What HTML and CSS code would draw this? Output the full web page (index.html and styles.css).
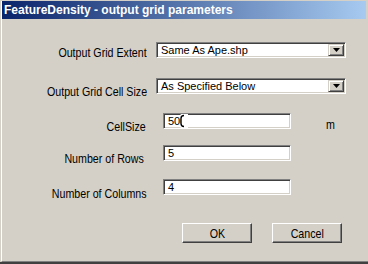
FILE: index.html
```html
<!DOCTYPE html>
<html>
<head>
<meta charset="utf-8">
<link rel="stylesheet" href="styles.css">
</head>
<body>
<div class="window">
  <div class="frame">
    <div class="titlebar">FeatureDensity - output grid parameters</div>
    <div class="content">
      <div class="row r1">
        <div class="label"><span class="narrow">Output Grid Extent</span></div>
        <div class="combo">
          <span class="combo-text">Same As Ape.shp</span>
          <span class="combo-btn"><svg width="7" height="4" viewBox="0 0 7 4"><path d="M0 0H7L3.5 4Z" fill="#000"/></svg></span>
        </div>
      </div>
      <div class="row r2">
        <div class="label"><span class="narrow">Output Grid Cell Size</span></div>
        <div class="combo">
          <span class="combo-text">As Specified Below</span>
          <span class="combo-btn"><svg width="7" height="4" viewBox="0 0 7 4"><path d="M0 0H7L3.5 4Z" fill="#000"/></svg></span>
        </div>
      </div>
      <div class="row r3">
        <div class="label"><span class="narrow">CellSize</span></div>
        <div class="field has-cursor">500<svg class="ibeam" width="10" height="14" viewBox="0 0 10 14"><rect x="2.6" y="0" width="7.4" height="14" fill="#fff"/><path d="M6 1.5Q3 1.5 3 4.5V9.5Q3 12.5 6 12.5" fill="none" stroke="#000" stroke-width="1.4"/></svg></div>
        <div class="unit"><span class="narrow">m</span></div>
      </div>
      <div class="row r4">
        <div class="label"><span class="narrow">Number of Rows</span></div>
        <div class="field">5</div>
      </div>
      <div class="row r5">
        <div class="label"><span class="narrow">Number of Columns</span></div>
        <div class="field">4</div>
      </div>
      <div class="buttons">
        <div class="btn"><span class="narrow">OK</span></div>
        <div class="btn"><span class="narrow">Cancel</span></div>
      </div>
    </div>
  </div>
</div>
</body>
</html>
```
FILE: styles.css
```css
html, body { margin: 0; padding: 0; background: #d4d0c8; }
.window {
  width: 368px; height: 264px; box-sizing: border-box;
  background: #d4d0c8;
  padding: 1px 0 0 1px;
  border-bottom: 2px solid #404040;
}
.frame {
  height: 100%; box-sizing: border-box;
  border-left: 1px solid #ffffff;
  border-bottom: 1px solid #808080;
}
.titlebar {
  height: 18px; margin-right: 2px;
  background: linear-gradient(to right, #0a246a, #a6caf0);
  color: #fff;
  font: bold 12px "Liberation Sans", Arial, sans-serif;
  line-height: 18px;
  padding-left: 2px;
  white-space: nowrap;
}
.content { display: flex; flex-direction: column; }
.row { display: flex; align-items: flex-start; height: 16px; }
.r1 { margin-top: 23px; }
.r2 { margin-top: 20px; }
.r3 { margin-top: 19px; }
.r4 { margin-top: 16px; }
.r5 { margin-top: 18px; }
.narrow {
  display: inline-block;
  font: 13px "Liberation Sans", Arial, sans-serif;
  transform: scaleX(0.82);
  white-space: nowrap;
}
.label {
  width: 145px; flex: none; box-sizing: border-box; text-align: right;
  line-height: 16px; color: #000; white-space: nowrap;
  padding-top: 5px;
}
.label .narrow { transform-origin: right center; }
.r1 .label { padding-top: 2px; }
.r3 .label { padding-right: 1px; }
.r4 .label { padding-right: 3px; }
.r5 .label { padding-top: 6px; padding-right: 0; }
.combo {
  margin-left: 9px;
  width: 190px; height: 16px; box-sizing: border-box;
  background: #fff;
  border-style: solid; border-width: 1px;
  border-color: #808080 #ffffff #ffffff #808080;
  box-shadow: inset 1px 1px 0 #404040, inset -1px -1px 0 #d4d0c8;
  display: flex; align-items: center; justify-content: space-between;
  padding: 1px;
}
.combo-text {
  font: 11px "Liberation Sans", Arial, sans-serif; color: #000;
  padding-left: 3px; line-height: 12px;
}
.combo-btn {
  width: 16px; height: 12px; box-sizing: border-box;
  background: #d4d0c8;
  border-style: solid; border-width: 1px;
  border-color: #d4d0c8 #404040 #404040 #d4d0c8;
  box-shadow: inset 1px 1px 0 #fff, inset -1px -1px 0 #808080;
  display: flex; align-items: center; justify-content: center;
}
.combo-btn svg { display: block; }
.field {
  margin-left: 16px;
  width: 128px; height: 16px; box-sizing: border-box;
  background: #fff;
  border-style: solid; border-width: 1px;
  border-color: #808080 #ffffff #ffffff #808080;
  box-shadow: inset 1px 1px 0 #404040, inset -1px -1px 0 #d4d0c8;
  font: 11px "Liberation Sans", Arial, sans-serif; color: #000;
  line-height: 14px; padding-left: 4px;
}
.has-cursor { position: relative; }
.ibeam { position: absolute; left: 14px; top: 0; display: block; }
.unit {
  margin-left: 35px;
  line-height: 16px; padding-top: 3px;
}
.unit .narrow { transform-origin: left center; }
.buttons {
  display: flex; gap: 20px; margin-top: 28px; margin-left: 180px;
}
.btn {
  width: 70px; height: 20px; box-sizing: border-box;
  border-style: solid; border-width: 1px;
  border-color: #ffffff #404040 #404040 #ffffff;
  box-shadow: inset -1px -1px 0 #808080;
  display: flex; align-items: center; justify-content: center;
  color: #000;
}
.btn .narrow { font-size: 13px; }
```
